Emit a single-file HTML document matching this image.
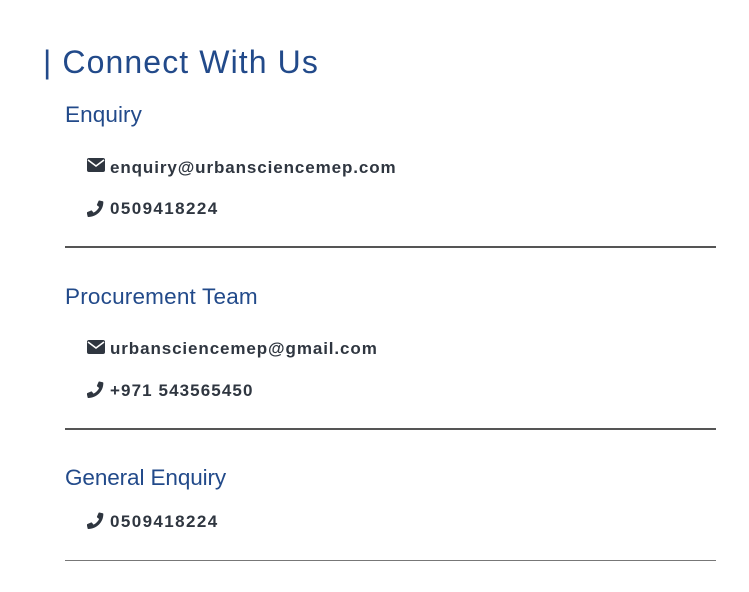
<!DOCTYPE html>
<html><head><meta charset="utf-8"><style>
body{margin:0;width:749px;height:592px;background:#fff;font-family:"Liberation Sans",sans-serif;position:relative;overflow:hidden}
.a{position:absolute;white-space:nowrap}
.t{left:43px;top:44px;font-size:32px;color:#224a8a;letter-spacing:1.1px}
.h{left:65px;font-size:22.5px;color:#224a8a;letter-spacing:0.1px}
.r{left:110px;font-size:17px;font-weight:bold;color:#2f3640;letter-spacing:0.9px}
.ic{position:absolute;left:87px}
.hr{position:absolute;left:65px;width:651px;height:2px;background:#555}
</style></head><body>
<div class="a t">| Connect With Us</div>

<div class="a h" style="top:102px">Enquiry</div>
<svg class="ic" style="top:158px" width="18" height="14" viewBox="0 0 18 14"><rect x="0" y="0" width="18" height="14" rx="2" fill="#2f3640"/><path d="M1 2 L9 8 L17 2" stroke="#fff" stroke-width="1.6" fill="none"/></svg>
<div class="a r" style="top:158px">enquiry@urbansciencemep.com</div>
<svg class="ic" style="top:200px" width="17" height="17" viewBox="0 0 512 512"><g transform="translate(512 0) scale(-1 1)"><path fill="#2f3640" d="M497 361l-107-46c-10-4-21-1-28 7l-47 58c-74-35-134-95-169-169l58-47c8-7 11-18 7-28L165 29c-5-11-16-16-27-14L39 38C28 41 20 50 20 61c0 248 201 451 451 451 11 0 20-8 23-19l23-99c2-11-4-23-14-27z"/></g></svg>
<div class="a r" style="top:199px;letter-spacing:1.4px">0509418224</div>
<div class="hr" style="top:246px"></div>

<div class="a h" style="top:284px;letter-spacing:0.2px">Procurement Team</div>
<svg class="ic" style="top:340px" width="18" height="14" viewBox="0 0 18 14"><rect x="0" y="0" width="18" height="14" rx="2" fill="#2f3640"/><path d="M1 2 L9 8 L17 2" stroke="#fff" stroke-width="1.6" fill="none"/></svg>
<div class="a r" style="top:339px">urbansciencemep@gmail.com</div>
<svg class="ic" style="top:381px" width="17" height="17" viewBox="0 0 512 512"><g transform="translate(512 0) scale(-1 1)"><path fill="#2f3640" d="M497 361l-107-46c-10-4-21-1-28 7l-47 58c-74-35-134-95-169-169l58-47c8-7 11-18 7-28L165 29c-5-11-16-16-27-14L39 38C28 41 20 50 20 61c0 248 201 451 451 451 11 0 20-8 23-19l23-99c2-11-4-23-14-27z"/></g></svg>
<div class="a r" style="top:381px;letter-spacing:1.1px">+971 543565450</div>
<div class="hr" style="top:428px"></div>

<div class="a h" style="top:465px;letter-spacing:-0.1px">General Enquiry</div>
<svg class="ic" style="top:512px" width="17" height="17" viewBox="0 0 512 512"><g transform="translate(512 0) scale(-1 1)"><path fill="#2f3640" d="M497 361l-107-46c-10-4-21-1-28 7l-47 58c-74-35-134-95-169-169l58-47c8-7 11-18 7-28L165 29c-5-11-16-16-27-14L39 38C28 41 20 50 20 61c0 248 201 451 451 451 11 0 20-8 23-19l23-99c2-11-4-23-14-27z"/></g></svg>
<div class="a r" style="top:512px;letter-spacing:1.4px">0509418224</div>
<div class="hr" style="top:560px;height:1px;background:#777"></div>
</body></html>
